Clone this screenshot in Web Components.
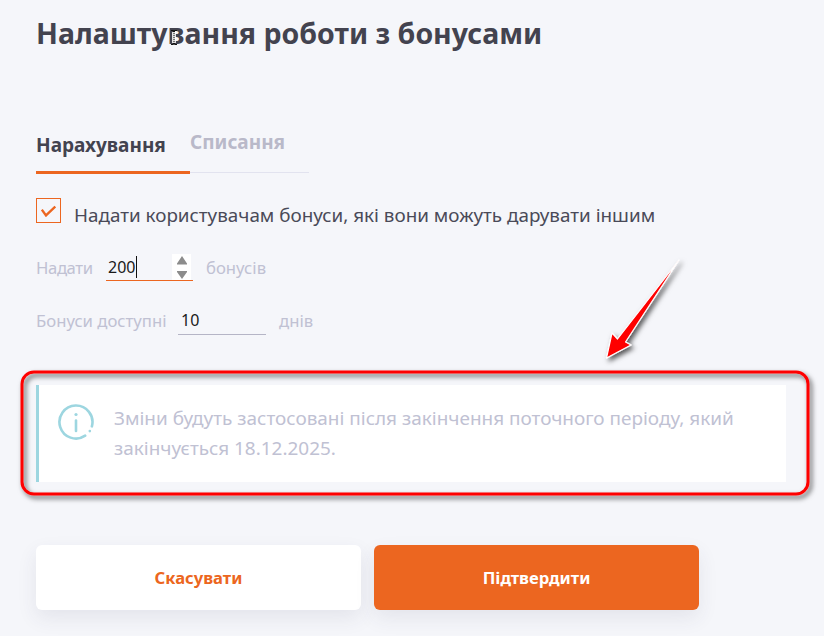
<!DOCTYPE html>
<html lang="uk">
<head>
<meta charset="utf-8">
<title>Бонуси</title>
<style>
  html, body { margin: 0; height: 100%; }
  body { background: #f5f6fa; font-family: "Noto Sans", "Open Sans", sans-serif; overflow: hidden; }
</style>
</head>
<body>
<bonus-settings></bonus-settings>

<script>
const ORANGE = '#ec6620';

class BonusTabs extends HTMLElement {
  constructor() {
    super();
    this.attachShadow({ mode: 'open' }).innerHTML = `
    <style>
      :host { display: flex; width: 273px; height: 66px; border-bottom: 1px solid #e2e3ef; box-sizing: border-box; }
      div { box-sizing: border-box; font-size: 19px; font-weight: 700; line-height: 26px; }
      .on { width: 154px; height: 67px; padding-top: 25px; color: #43434f; border-bottom: 3px solid ${ORANGE}; }
      .off { padding-top: 22px; color: #b9b9c9; }
    </style>
    <div class="on">Нарахування</div>
    <div class="off">Списання</div>`;
  }
}

class BonusCheck extends HTMLElement {
  constructor() {
    super();
    this.attachShadow({ mode: 'open' }).innerHTML = `
    <style>
      :host { display: flex; align-items: flex-start; gap: 13px; height: 26px; font-size: 18.850px; line-height: 26px; color: #4a4a58; }
      .box { width: 25px; height: 25px; box-sizing: border-box; border: 1.700px solid ${ORANGE}; display: flex; align-items: center; justify-content: center; }
      span { margin-top: 4px; white-space: nowrap; }
    </style>
    <div class="box">
      <svg width="15" height="12" viewBox="0 0 15 12"><path d="M.8 4.600 5 10.400 14.300 1.500" fill="none" stroke="${ORANGE}" stroke-width="2.400"/></svg>
    </div>
    <span><slot></slot></span>`;
  }
}

class BonusField extends HTMLElement {
  constructor() {
    super();
    this.attachShadow({ mode: 'open' }).innerHTML = `
    <style>
      :host { display: flex; align-items: center; font-size: 16.700px; color: #c0c1d3; height: 28px; white-space: nowrap; }
      .before { flex: none; }
      .input { position: relative; align-self: flex-start; box-sizing: border-box; height: 29px; margin: 0 13px 0 12px; padding: 1px 0 0 3px; font-size: 16px; color: #1a1a1a; border-bottom: 1px solid #b5b5c6; line-height: 26px; display: flex; }
      :host([active]) .input { border-bottom-color: ${ORANGE}; height: 28px; padding-left: 2px; }
      .caret { width: 1px; height: 22px; background: #111; margin: 2px 0 0 1px; }
      .spin { position: absolute; right: 2px; top: 1px; bottom: 0; width: 19px; background: #fff; }
      svg { display: block; position: absolute; left: 5px; top: 2px; }
    </style>
    <span class="before"><slot name="before"></slot></span>
    <div class="input"><span class="val"></span></div>
    <span><slot name="after"></slot></span>`;
  }
  connectedCallback() {
    const input = this.shadowRoot.querySelector('.input');
    input.style.width = this.getAttribute('width') + 'px';
    this.shadowRoot.querySelector('.before').style.width = this.getAttribute('label') + 'px';
    this.shadowRoot.querySelector('.val').textContent = this.getAttribute('value');
    if (this.hasAttribute('active')) {
      const caret = document.createElement('div');
      caret.className = 'caret';
      input.appendChild(caret);
      const spin = document.createElement('div');
      spin.className = 'spin';
      spin.innerHTML = '<svg width="10" height="23" viewBox="0 0 10 23"><path d="M5 0 10 7.500V8.500H0V7.500Z M0 15H10V16L5 23 0 16Z" fill="#8c8c8c"/></svg>';
      input.appendChild(spin);
    }
  }
}

class BonusNotice extends HTMLElement {
  constructor() {
    super();
    this.attachShadow({ mode: 'open' }).innerHTML = `
    <style>
      :host { display: flex; align-items: flex-start; width: 750px; height: 97px; box-sizing: border-box; background: #fff; border-left: 3px solid #9dd6e0; padding: 18px 36px 0 18px; gap: 19px; color: #c0c1d3; font-size: 18.950px; line-height: 30px; }
      svg { flex: none; }
    </style>
    <svg width="38" height="38" viewBox="0 0 38 38" fill="none" stroke="#9dd6e0" stroke-width="2.600" stroke-linecap="round">
      <path d="M28.200 32.700A16.500 16.500 0 1 1 34.900 23.300"/>
      <path d="M32.800 28.100h.01"/>
      <path d="M19 17.500V28"/>
      <path d="M19 11.500h.01" stroke-width="3.200"/>
    </svg>
    <div><slot></slot></div>`;
  }
}

class BonusButton extends HTMLElement {
  constructor() {
    super();
    this.attachShadow({ mode: 'open' }).innerHTML = `
    <style>
      :host { display: flex; align-items: center; justify-content: center; width: 325px; height: 65px; border-radius: 6px; background: #fff; color: ${ORANGE}; font-size: 16.600px; font-weight: 700; box-shadow: 0 8px 20px rgba(60,60,90,.09); }
      :host([primary]) { background: ${ORANGE}; color: #fff; }
    </style>
    <slot></slot>`;
  }
}

// the red marks somebody drew over the screenshot, plus the mouse cursor
class BonusMarks extends HTMLElement {
  constructor() {
    super();
    this.attachShadow({ mode: 'open' }).innerHTML = `
    <style>
      :host { position: absolute; left: 0; top: 0; width: 824px; height: 636px; pointer-events: none; }
      svg { display: block; }
    </style>
    <svg width="824" height="636" viewBox="0 0 824 636">
      <defs>
        <filter id="sh" x="-10%" y="-10%" width="125%" height="125%">
          <feDropShadow dx="2.500" dy="3" stdDeviation="2.400" flood-color="#000" flood-opacity=".65"/>
        </filter>
      </defs>
      <rect x="22" y="372" width="786" height="122" rx="12" fill="none" stroke="#fe0000" stroke-width="3" filter="url(#sh)"/>
      <path d="M679 260 625.500 342 631 345 606.500 358 612 333 617.500 339Z" fill="#fe0000" stroke="#fff" stroke-width="1.200" stroke-linejoin="round" filter="url(#sh)"/>
      <path d="M171 30.500H173.500V44.500H171M177 30.500H174.500V44.500H177" stroke="#111" stroke-width="1" fill="none"/>
      <path d="M172 32H176V43H172Z" fill="#fff" fill-opacity=".85"/>
      <path d="M174 31V44" stroke="#111" stroke-width="1" stroke-dasharray="1 1"/>
    </svg>`;
  }
}

class BonusSettings extends HTMLElement {
  constructor() {
    super();
    this.attachShadow({ mode: 'open' }).innerHTML = `
    <style>
      :host { display: block; position: relative; box-sizing: border-box; width: 824px; height: 636px; padding: 14px 0 0 36px; }
      h1 { margin: 0; font-size: 28.500px; line-height: 38px; font-weight: 700; color: #43434f; }
      bonus-tabs { margin-top: 55px; }
      bonus-check { margin-top: 25px; }
      .f1 { margin-top: 29px; }
      .f2 { margin-top: 25px; }
      bonus-notice { margin-top: 51px; }
      .actions { display: flex; gap: 13px; margin-top: 63px; }
    </style>
    <h1>Налаштування роботи з бонусами</h1>
    <bonus-tabs></bonus-tabs>
    <bonus-check>Надати користувачам бонуси, які вони можуть дарувати іншим</bonus-check>
    <bonus-field class="f1" active value="200" width="87" label="58"><span slot="before" style="letter-spacing:-.4px">Надати</span><span slot="after">бонусів</span></bonus-field>
    <bonus-field class="f2" value="10" width="88" label="130"><span slot="before">Бонуси доступні</span><span slot="after">днів</span></bonus-field>
    <bonus-notice>Зміни будуть застосовані після закінчення поточного періоду, який закінчується 18.12.2025.</bonus-notice>
    <div class="actions">
      <bonus-button>Скасувати</bonus-button>
      <bonus-button primary>Підтвердити</bonus-button>
    </div>
    <bonus-marks></bonus-marks>`;
  }
}

customElements.define('bonus-tabs', BonusTabs);
customElements.define('bonus-check', BonusCheck);
customElements.define('bonus-field', BonusField);
customElements.define('bonus-notice', BonusNotice);
customElements.define('bonus-button', BonusButton);
customElements.define('bonus-marks', BonusMarks);
customElements.define('bonus-settings', BonusSettings);
</script>
</body>
</html>
